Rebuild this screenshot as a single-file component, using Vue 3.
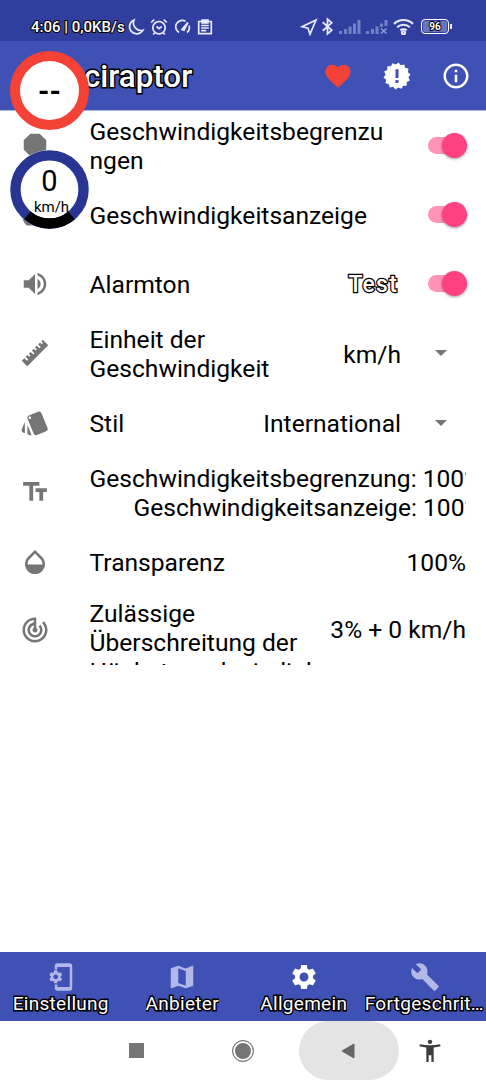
<template>
  <div class="screen">
    <header class="status-bar">
      <div class="status-left">
        <span class="clock outlined">4:06 | 0,0KB/s</span>
        <svg class="moon" viewBox="0 0 18 18"><path d="M7 2a7.200 7.200 0 1 0 9 10.200A7.600 7.600 0 0 1 7 2z" /></svg>
        <svg class="alarm" viewBox="0 0 18 18">
          <circle cx="9" cy="9.700" r="6.200" />
          <path d="M1.200 4.500l3-2.800M16.800 4.500l-3-2.800M6.500 8.500L9 10.700l2.700-2.200M4.500 15l-1.300 1.500M13.500 15l1.300 1.500" />
        </svg>
        <svg class="gauge" viewBox="0 0 16 16"><path d="M4 13.500A6.300 6.300 0 0 1 10.500 2.200M14 6.500a6.300 6.300 0 0 1-2 7" /><path d="M7 10.500L12.800 3.500 9 11.200z" /></svg>
        <svg class="clipboard" viewBox="0 0 16 16">
          <path d="M1.700 2.500h12.600v12.200H1.700zM5 1.200h6v2.600H5zM4.200 6.500h7.600M4.200 9h7.600M4.200 11.700h5" />
        </svg>
      </div>
      <div class="status-right">
        <svg class="location" viewBox="0 0 18 18"><path d="M16 2L2 8.700l6 1.500 2 6z" /></svg>
        <svg class="bluetooth" viewBox="0 0 12 18"><path d="M1.500 5l8.500 7.500L6 16V2l4 3.500L1.500 13" /></svg>
        <svg class="signal" viewBox="0 0 22 14">
          <path d="M0 11h3v3H0zM5 9h3v5H5zM9.500 6.500h3V14h-3zM14 3.500h3V14h-3zM18.500 0h3v14h-3z" />
        </svg>
        <svg class="signal" viewBox="0 0 22 14">
          <path d="M0 11h3v3H0zM5 9h3v5H5zM9.500 6.500h3V14h-3zM14 3.500h3V7h-3zM18.500 0h3v6h-3z" />
          <path class="cross" d="M15 8.500l5.500 5M20.500 8.500l-5.500 5" />
        </svg>
        <svg class="wifi" viewBox="0 0 20 16"><path d="M1 5.500a13 13 0 0 1 18 0M4 8.700a8.700 8.700 0 0 1 12 0M7 11.700a4.500 4.500 0 0 1 6 0" /><circle cx="10" cy="14" r="1.500" /></svg>
        <div class="battery"><span class="outlined">96</span></div>
        <span class="battery-tip"></span>
      </div>
    </header>

    <div class="app-bar">
      <h1 class="app-title outlined">Velociraptor</h1>
      <div class="actions">
        <svg v-for="a in actions" :key="a.name" class="icon" :class="a.name" viewBox="0 0 24 24">
          <path :d="a.path" />
        </svg>
      </div>
    </div>

    <main class="settings">
      <section v-for="row in rows" :key="row.icon" class="row" :class="`row-${row.icon}`">
        <svg class="icon row-icon" viewBox="0 0 24 24"><path :d="icons[row.icon]" /></svg>
        <div v-if="row.sizes" class="sizes">
          <div v-for="s in row.sizes" :key="s">{{ s }}</div>
        </div>
        <template v-else>
          <div class="label">{{ row.label }}</div>
          <span v-if="row.test" class="test outlined">Test</span>
          <span v-if="row.value" class="value" :class="{ select: row.select }">{{ row.value }}</span>
          <span v-if="row.select" class="caret"></span>
          <span v-if="row.toggle" class="switch"><span class="thumb"></span></span>
        </template>
      </section>
    </main>

    <nav class="tabs">
      <div v-for="tab in tabs" :key="tab.label" class="tab" :class="{ active: tab.active }">
        <svg class="icon" viewBox="0 0 24 24">
          <path v-if="tab.icon !== 'setup'" :d="icons[tab.icon]" />
          <template v-else>
            <path d="M9 1h10c1.100 0 2 .9 2 2v18c0 1.100-.9 2-2 2H9c-1.100 0-2-.9-2-2v-3h2v2h10V4H9v2H7V3c0-1.100.9-2 2-2z" />
            <path transform="translate(1.300 5.400) scale(.54)" :d="icons.gear" />
          </template>
        </svg>
        <span class="tab-label outlined">{{ tab.label }}</span>
      </div>
    </nav>

    <footer class="system-nav">
      <span class="recent"></span>
      <span class="home"></span>
      <span class="back"><svg viewBox="0 0 16 18"><path d="M14 2v14L2 9z" /></svg></span>
      <svg class="person" viewBox="0 0 24 26">
        <circle cx="12" cy="3" r="2.400" />
        <path d="M1 5.500c7 1.600 15 1.600 22 0l.5 2.400c-2.500.6-5 1-7.500 1.200V25h-2.500v-7.500h-3V25H8V9.100C5.500 8.900 3 8.500.5 7.900z" />
      </svg>
    </footer>

    <!-- 悬浮显示 -->
    <div class="overlay limit"><span>--</span></div>
    <div class="overlay speedometer">
      <svg viewBox="0 0 80 80">
        <circle cx="40" cy="40" r="34.500" />
        <path d="M17.600 66.200a34.500 34.500 0 0 0 44.800 0" />
      </svg>
      <span class="number">0</span>
      <span class="unit">km/h</span>
    </div>
  </div>
</template>

<script setup>
const icons = {
  octagon: 'M15.730 3H8.270L3 8.270v7.460L8.270 21h7.460L21 15.730V8.270z',
  speed: 'M12 3A10 10 0 0 0 2 13c0 3 1.300 5.500 3.300 7.300h13.400A10 10 0 0 0 12 3z',
  volume: 'M3 9v6h4l5 5V4L7 9H3zm13.500 3c0-1.770-1.020-3.290-2.500-4.030v8.050c1.480-.73 2.500-2.250 2.500-4.020zM14 3.230v2.060c2.890.86 5 3.540 5 6.710s-2.110 5.850-5 6.710v2.060c4.010-.91 7-4.490 7-8.770s-2.990-7.860-7-8.770z',
  ruler: 'M1.400 18.200l2.100-2.100 2.100 2.100 1-1-2.100-2.100 1.500-1.500 1.400 1.400 1-1-1.400-1.400 1.500-1.500 2.100 2.100 1-1-2.100-2.100L11 8.600l1.400 1.400 1-1L12 7.600l1.500-1.500 2.100 2.100 1-1-2.100-2.100L16 3.600 17.400 5l1-1L17 2.600l1.200-1.200 4.400 4.400L5.800 22.600z',
  style: 'M2.530 19.650l1.340.56v-9.030l-2.430 5.860c-.41 1.020.08 2.190 1.090 2.610zm19.500-3.700L17.070 3.980c-.31-.75-1.040-1.210-1.810-1.230-.26 0-.53.04-.79.15L7.100 5.950c-.75.31-1.210 1.030-1.230 1.800-.01.27.04.54.15.8l4.960 11.970c.31.76 1.050 1.220 1.830 1.230.26 0 .52-.05.77-.15l7.360-3.050c1.020-.42 1.510-1.590 1.090-2.600zM7.880 8.750c-.55 0-1-.45-1-1s.45-1 1-1 1 .45 1 1-.45 1-1 1zm-2 11c0 1.100.9 2 2 2h1.450l-3.450-8.340v6.340z',
  size: 'M2.500 4v3h5v12h3V7h5V4h-13zm19 5h-9v3h3v7h3v-7h3V9z',
  drop: 'M17.660 8L12 2.350 6.340 8C4.780 9.560 4 11.640 4 13.640s.78 4.110 2.340 5.670 3.610 2.350 5.660 2.350 4.100-.79 5.660-2.350S20 15.640 20 13.640 19.220 9.560 17.660 8zM6 14c.01-2 .62-3.270 1.760-4.400L12 5.270l4.240 4.380C17.380 10.770 17.990 12 18 14H6z',
  target: 'M19.070 4.930l-1.410 1.410C19.100 7.790 20 9.790 20 12c0 4.420-3.580 8-8 8s-8-3.580-8-8c0-4.080 3.050-7.440 7-7.930v2.020C8.160 6.570 6 9.030 6 12c0 3.310 2.690 6 6 6s6-2.690 6-6c0-1.660-.67-3.160-1.760-4.240l-1.410 1.410C15.550 9.900 16 10.900 16 12c0 2.210-1.790 4-4 4s-4-1.790-4-4c0-1.860 1.280-3.410 3-3.860v2.140c-.6.350-1 .98-1 1.720 0 1.100.9 2 2 2s2-.9 2-2c0-.74-.4-1.380-1-1.720V2h-1C6.480 2 2 6.480 2 12s4.480 10 10 10 10-4.480 10-10c0-2.760-1.120-5.260-2.930-7.070z',
  map: 'M20.500 3l-.16.030L15 5.100 9 3 3.360 4.900c-.21.070-.36.250-.36.480V20.500c0 .28.220.5.500.5l.16-.03L9 18.900l6 2.100 5.640-1.900c.21-.07.36-.25.36-.48V3.500c0-.28-.22-.5-.5-.5zM15 19l-6-2.110V5l6 2.110V19z',
  wrench: 'M22.700 19l-9.100-9.100c.9-2.300.4-5-1.500-6.900-2-2-5-2.400-7.400-1.300L9 6 6 9 1.600 4.700C.4 7.100.9 10.100 2.900 12.100c1.900 1.900 4.600 2.400 6.900 1.500l9.100 9.100c.4.4 1 .4 1.400 0l2.300-2.300c.5-.4.5-1.100.1-1.400z',
  gear: 'M19.140 12.940c.04-.3.060-.61.060-.94 0-.32-.02-.64-.07-.94l2.030-1.580c.18-.14.23-.41.12-.61l-1.920-3.320c-.12-.22-.37-.29-.59-.22l-2.390.96c-.5-.38-1.030-.7-1.620-.94L14.400 2.810c-.04-.24-.24-.41-.48-.41h-3.840c-.24 0-.43.17-.47.41L9.250 5.350C8.660 5.590 8.120 5.920 7.630 6.290L5.240 5.330c-.22-.08-.47 0-.59.22L2.740 8.870c-.12.21-.08.47.12.61l2.030 1.580C4.840 11.360 4.800 11.690 4.800 12s.02.64.07.94l-2.030 1.580c-.18.14-.23.41-.12.61l1.920 3.320c.12.22.37.29.59.22l2.390-.96c.5.38 1.030.7 1.620.94l.36 2.540c.05.24.24.41.48.41h3.840c.24 0 .44-.17.47-.41l.36-2.540c.59-.24 1.130-.56 1.620-.94l2.390.96c.22.08.47 0 .59-.22l1.920-3.320c.12-.22.07-.47-.12-.61zM12 15.600c-1.980 0-3.600-1.620-3.600-3.600s1.620-3.600 3.600-3.600 3.600 1.620 3.600 3.600-1.620 3.600-3.600 3.600z'
}

// 锯齿徽章轮廓
const badgePoints = Array.from({ length: 28 }, (_, i) => {
  const r = i % 2 ? 9.2 : 10.9
  const a = (Math.PI * (i + 0.5)) / 14
  return `${(12 + r * Math.sin(a)).toFixed(2)} ${(12 - r * Math.cos(a)).toFixed(2)}`
})

const actions = [
  {
    name: 'heart',
    path: 'M12 21.350l-1.450-1.320C5.400 15.360 2 12.280 2 8.500 2 5.420 4.420 3 7.500 3c1.740 0 3.410.81 4.500 2.090C13.090 3.810 14.760 3 16.500 3 19.580 3 22 5.420 22 8.500c0 3.780-3.400 6.860-8.550 11.540z'
  },
  { name: 'badge', path: `M${badgePoints.join('L')}zM10.800 6.500v7h2.400v-7zM10.800 15.200v2.400h2.400v-2.400z` },
  {
    name: 'info',
    path: 'M11 7h2v2h-2zm0 4h2v6h-2zm1-9C6.480 2 2 6.480 2 12s4.480 10 10 10 10-4.480 10-10S17.520 2 12 2zm0 18c-4.410 0-8-3.590-8-8s3.590-8 8-8 8 3.590 8 8-3.590 8-8 8z'
  }
]

const rows = [
  { icon: 'octagon', label: 'Geschwindigkeitsbegrenzungen', toggle: true },
  { icon: 'speed', label: 'Geschwindigkeitsanzeige', toggle: true },
  { icon: 'volume', label: 'Alarmton', test: true, toggle: true },
  { icon: 'ruler', label: 'Einheit der Geschwindigkeit', value: 'km/h', select: true },
  { icon: 'style', label: 'Stil', value: 'International', select: true },
  { icon: 'size', sizes: ['Geschwindigkeitsbegrenzung: 100%', 'Geschwindigkeitsanzeige: 100%'] },
  { icon: 'drop', label: 'Transparenz', value: '100%' },
  { icon: 'target', label: 'Zulässige Überschreitung der Höchstgeschwindigkeit', value: '3% + 0 km/h' }
]

const tabs = [
  { icon: 'setup', label: 'Einstellung' },
  { icon: 'map', label: 'Anbieter' },
  { icon: 'gear', label: 'Allgemein', active: true },
  { icon: 'wrench', label: 'Fortgeschritten' }
]
</script>

<style>
body {
  margin: 0;
}
</style>

<style scoped>
.screen {
  position: relative;
  width: 486px;
  height: 1080px;
  display: flex;
  flex-direction: column;
  overflow: hidden;
  background: #fff;
  color: #000;
  font-family: Roboto, "Noto Sans", sans-serif;
}

.screen * {
  box-sizing: border-box;
}

svg {
  display: block;
  flex-shrink: 0;
}

.icon {
  width: 30px;
  height: 30px;
  fill: currentColor;
  fill-rule: evenodd;
}

.outlined {
  color: #fff;
  -webkit-text-stroke: 3px #000;
  paint-order: stroke fill;
}

/* 状态栏 */
.status-bar {
  flex: 0 0 41px;
  display: flex;
  justify-content: space-between;
  padding: 12px 34px 0 31px;
  background: #303f9f;
  color: #e8eaff;
}

.status-left,
.status-right {
  display: flex;
  align-items: center;
  height: 29px;
}

.status-left svg,
.location,
.bluetooth,
.wifi {
  fill: none;
  stroke: currentColor;
  stroke-width: 1.7;
}

.clock {
  width: 96px;
  font-size: 15px;
  font-weight: 500;
  white-space: nowrap;
  -webkit-text-stroke-width: 2px;
}

.moon {
  width: 18px;
  height: 18px;
}

.alarm {
  width: 18px;
  height: 18px;
  margin-left: 5px;
}

.gauge {
  width: 16px;
  height: 16px;
  margin-left: 7px;
}

.clipboard {
  width: 16px;
  height: 16px;
  margin-left: 6px;
}

.location {
  width: 18px;
  height: 18px;
}

.bluetooth {
  width: 13px;
  height: 19px;
  margin-left: 3px;
}

.signal {
  width: 22px;
  height: 14px;
  margin-left: 5px;
  fill: #7580c6;
}

.signal .cross {
  stroke: #8f99d6;
  stroke-width: 1.5;
}

.wifi {
  width: 21px;
  height: 17px;
  margin-left: 5px;
  stroke-width: 2;
}

.battery {
  display: flex;
  align-items: center;
  justify-content: center;
  width: 28px;
  height: 15px;
  margin-left: 7px;
  border: 1.5px solid #fff;
  border-radius: 4px;
  background: #6975bd;
  box-shadow: inset 0 0 0 1px #303f9f;
}

.battery-tip {
  width: 2px;
  height: 5px;
  margin-left: 1px;
  background: #e8eaff;
}

.battery span {
  font-size: 10px;
  font-weight: 700;
  line-height: 11px;
  -webkit-text-stroke-width: 2px;
}

/* 标题栏 */
.app-bar {
  flex: 0 0 69.5px;
  display: flex;
  align-items: center;
  justify-content: space-between;
  padding: 1px 15px 0 22px;
  background: #3f51b5;
  border-bottom: 1px solid #a9b4e0;
}

.app-title {
  margin: 2px 0 0;
  font-size: 31.3px;
  font-weight: 500;
}

.actions {
  display: flex;
  gap: 29px;
  color: #fff;
}

.heart {
  color: #f44336;
}

/* 设置列表 */
.settings {
  flex: 0 0 554px;
  overflow: hidden;
}

.row {
  display: flex;
  align-items: center;
  height: 69.4px;
  padding: 0 20px 0 19.5px;
  font-size: 24.6px;
  line-height: 29px;
}

.row-icon {
  flex-shrink: 0;
  margin-right: 40px;
  color: #757575;
}

.label {
  flex: 1;
  min-width: 0;
  max-height: 69.4px;
  padding-top: 2px;
  overflow-wrap: anywhere;
}

.row-octagon .label {
  padding-right: 38px;
}

.row-target {
  align-items: flex-start;
  padding-top: 1px;
}

.row-target .row-icon {
  margin-top: 18px;
}

.row-target .value {
  margin: 18px 0 0 8px;
}

.sizes {
  flex: 1;
  min-width: 0;
  display: flex;
  flex-direction: column;
  padding-top: 2px;
  overflow: hidden;
  white-space: nowrap;
}

.sizes div:last-child {
  padding-left: 44px;
}

.value {
  flex-shrink: 0;
  margin-left: 20px;
  padding-top: 2px;
  white-space: nowrap;
}

.row-target .value {
  padding-top: 0;
}

.value.select {
  margin-right: 34px;
}

.caret {
  margin-right: 19px;
  border: 6px solid transparent;
  border-top-color: #757575;
  border-bottom: 0;
}

.test {
  margin-right: 30px;
  padding-top: 1px;
  font-size: 23px;
  font-weight: 500;
  letter-spacing: 1.2px;
  -webkit-text-stroke-width: 2.5px;
}

.switch {
  flex-shrink: 0;
  width: 38px;
  height: 17px;
  border-radius: 9px;
  background: #ff94b7;
}

.thumb {
  display: block;
  width: 25px;
  height: 25px;
  margin: -4px 0 0 14px;
  border-radius: 50%;
  background: #ff4081;
  box-shadow: 0 1px 3px rgba(0, 0, 0, 0.4);
}

/* 底部标签 */
.tabs {
  flex: 0 0 69px;
  display: grid;
  grid-template-columns: repeat(4, 121.5px);
  margin-top: auto;
  background: #3f51b5;
}

.tab {
  display: flex;
  flex-direction: column;
  align-items: center;
  padding-top: 10px;
  color: #b2b9e8;
}

.tab.active {
  color: #fff;
}

.tab-label {
  max-width: 121px;
  overflow: hidden;
  text-overflow: ellipsis;
  white-space: nowrap;
  font-size: 19px;
  letter-spacing: 0.3px;
  line-height: 23px;
}

/* 系统导航 */
.system-nav {
  flex: 0 0 59px;
  display: flex;
  align-items: center;
  padding-left: 129px;
  background: #fff;
}

.recent {
  width: 15px;
  height: 15px;
  background: #757575;
}

.home {
  width: 22px;
  height: 22px;
  margin-left: 88px;
  border: 1.5px solid #757575;
  border-radius: 50%;
  background: #757575;
  box-shadow: inset 0 0 0 2px #fff;
}

.back {
  display: flex;
  align-items: center;
  justify-content: center;
  width: 100px;
  height: 59px;
  margin-left: 45px;
  padding-right: 2px;
  border-radius: 30px;
  background: #e4e4e4;
}

.back svg {
  width: 16px;
  height: 18px;
  fill: #666;
  stroke: #666;
}

.person {
  width: 22px;
  height: 26px;
  margin-left: 20px;
  fill: #3c3c3c;
}

/* 悬浮圆牌 */
.overlay {
  position: absolute;
  left: 10px;
  width: 79px;
  height: 79px;
  border-radius: 50%;
  background: #fff;
}

.limit {
  top: 51px;
  display: flex;
  align-items: center;
  justify-content: center;
  border: 10px solid #f44336;
  font-size: 29px;
  font-weight: 700;
}

.speedometer {
  top: 150px;
  display: flex;
  flex-direction: column;
  align-items: center;
}

.speedometer svg {
  position: absolute;
  inset: 0;
  fill: none;
  stroke: #283593;
  stroke-width: 10.5;
}

.speedometer path {
  stroke: #000;
}

.number {
  margin-top: 14px;
  font-size: 29px;
  line-height: 34px;
}

.unit {
  position: relative;
  margin-left: 4px;
  font-size: 15px;
  line-height: 18px;
}
</style>
